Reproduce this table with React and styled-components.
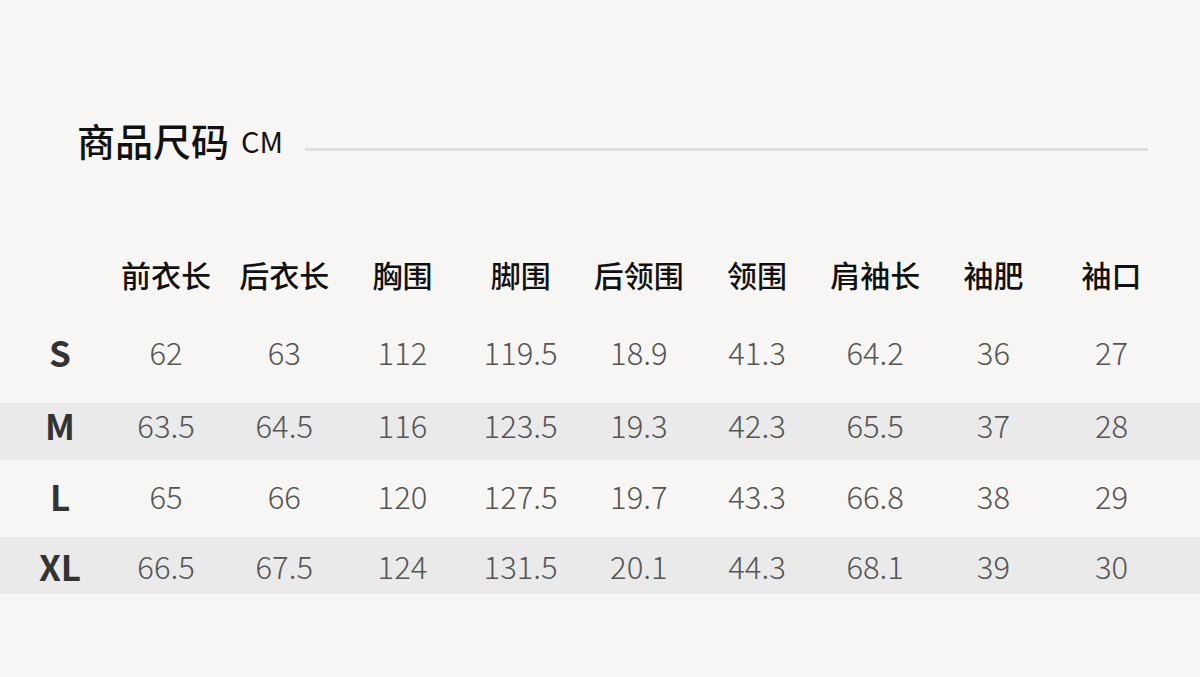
import React from "react";
import styled, { createGlobalStyle } from "styled-components";

const Global = createGlobalStyle`
  html, body { margin: 0; padding: 0; background: #f7f6f4; }
  body { font-family: "Noto Sans CJK SC", "Noto Sans", sans-serif; }
`;

const Page = styled.div`
  width: 1200px;
  height: 677px;
  background: #f7f6f4;
  overflow: hidden;
`;

const TitleBar = styled.div`
  display: flex;
  align-items: flex-end;
  padding: 116px 52px 0 77px;
`;

const Title = styled.h1`
  margin: 0;
  font-size: 38px;
  line-height: 48px;
  font-weight: 500;
  color: #111;
`;

const Unit = styled.span`
  font-size: 29px;
  line-height: 48px;
  font-weight: 400;
  color: #111;
  margin-left: 12px;
`;

const Rule = styled.div`
  flex: 1;
  height: 3px;
  background: #dedede;
  margin: 0 0 13px 22px;
`;

const Table = styled.div`
  display: flex;
  flex-direction: column;
  margin-top: 82px;
`;

const Row = styled.div`
  display: grid;
  grid-template-columns: 107px repeat(9, 118.2px);
  align-items: center;
  align-content: center;
  height: ${(p) => p.$height}px;
  padding-bottom: ${(p) => p.$pb ?? 3}px;
  box-sizing: border-box;
  background: ${(p) => (p.$striped ? "#eaeaea" : "transparent")};
`;

const HeadCell = styled.div`
  text-align: center;
  font-size: 30px;
  line-height: 40px;
  font-weight: 500;
  color: #111;
  white-space: nowrap;
`;

const SizeCell = styled.div`
  text-align: center;
  padding-left: 13px;
  font-size: 35px;
  line-height: 40px;
  font-weight: 700;
  color: #333;
`;

const Cell = styled.div`
  text-align: center;
  font-size: 31px;
  line-height: 40px;
  font-weight: 300;
  color: #555;
`;

const headers = ["前衣长", "后衣长", "胸围", "脚围", "后领围", "领围", "肩袖长", "袖肥", "袖口"];

const rows = [
  { size: "S", height: 97, pb: 5, values: ["62", "63", "112", "119.5", "18.9", "41.3", "64.2", "36", "27"] },
  { size: "M", height: 57, striped: true, pb: 13, values: ["63.5", "64.5", "116", "123.5", "19.3", "42.3", "65.5", "37", "28"] },
  { size: "L", height: 77, pb: 5, values: ["65", "66", "120", "127.5", "19.7", "43.3", "66.8", "38", "29"] },
  { size: "XL", height: 57, striped: true, pb: 0, values: ["66.5", "67.5", "124", "131.5", "20.1", "44.3", "68.1", "39", "30"] },
];

export default function App() {
  return (
    <Page>
      <Global />
      <TitleBar>
        <Title>商品尺码</Title>
        <Unit>CM</Unit>
        <Rule />
      </TitleBar>
      <Table>
        <Row $height={60} $pb={4}>
          <div />
          {headers.map((h) => (
            <HeadCell key={h}>{h}</HeadCell>
          ))}
        </Row>
        {rows.map((r) => (
          <Row key={r.size} $height={r.height} $striped={r.striped} $pb={r.pb}>
            <SizeCell>{r.size}</SizeCell>
            {r.values.map((v, i) => (
              <Cell key={i}>{v}</Cell>
            ))}
          </Row>
        ))}
      </Table>
    </Page>
  );
}
